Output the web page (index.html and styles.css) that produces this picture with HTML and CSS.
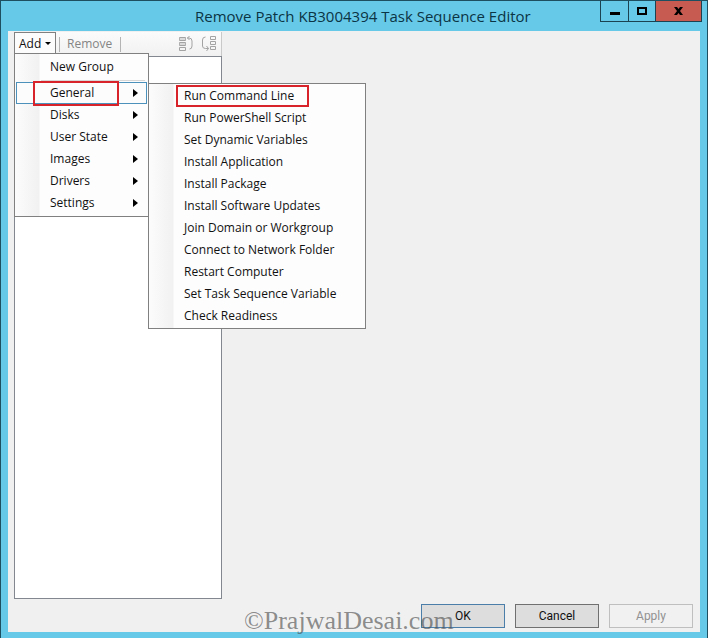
FILE: index.html
```html
<!DOCTYPE html>
<html lang="en">
<head>
<meta charset="utf-8">
<title>Remove Patch KB3004394 Task Sequence Editor</title>
<link rel="stylesheet" href="styles.css">
</head>
<body>
<div class="window">
  <header class="titlebar">
    <h1 class="title">Remove Patch KB3004394 Task Sequence Editor</h1>
    <div class="controls">
      <div class="control minimize"><svg width="10" height="3"><path d="M0 0h10v3H0z"/></svg></div>
      <div class="control maximize"><svg width="10" height="8"><path d="M1 1h8v6H1z" fill="none" stroke="#000" stroke-width="2"/></svg></div>
      <div class="control close"><svg width="9" height="8"><path d="M0 0h3l1.5 2L6 0h3L6 4l3 4H6L4.500 6 3 8H0l3-4z"/></svg></div>
    </div>
  </header>
  <main class="client">
    <section class="sidebar">
      <div class="toolbar">
        <div class="add"><span>Add</span><svg width="6" height="3"><path d="M0 0h6L3 3z"/></svg></div>
        <i class="divider"></i>
        <span class="remove">Remove</span>
        <i class="divider"></i>
        <svg class="move" width="42" height="18" fill="none" stroke="#a3a3a3">
          <path d="M2.500 2.500h6v3h-6zM2.500 7.500h6v3h-6zM2.500 12.500h6v3h-6z"/>
          <path d="M2 4h7M2 9h7" stroke="#bcbcbc"/>
          <path d="M10 3h2q3 0 3 3v5q0 3-2.500 3M12.500 1L10.500 3l2 2"/>
          <path d="M33.500 1.500h5v3h-5zM33.500 6.500h5v3h-5zM33.500 11.500h5v3h-5z"/>
          <path d="M28.500 2Q25.500 2 25.500 5v6q0 2.500 3 2.500h3M29.500 11l2 2.500-2 2.500"/>
        </svg>
      </div>
      <div class="tree"></div>
    </section>
    <footer class="actions">
      <button class="button ok">OK</button>
      <button class="button">Cancel</button>
      <button class="button apply" disabled>Apply</button>
    </footer>
  </main>
  <nav class="menu main-menu">
    <div class="item first"><span>New Group</span></div>
    <div class="item selected"><span class="s-general">General</span><i class="arrow"></i></div>
    <div class="item"><span>Disks</span><i class="arrow"></i></div>
    <div class="item"><span>User State</span><i class="arrow"></i></div>
    <div class="item"><span>Images</span><i class="arrow"></i></div>
    <div class="item"><span>Drivers</span><i class="arrow"></i></div>
    <div class="item"><span>Settings</span><i class="arrow"></i></div>
  </nav>
  <nav class="menu submenu">
    <div class="item">Run Command Line</div>
    <div class="item">Run PowerShell Script</div>
    <div class="item">Set Dynamic Variables</div>
    <div class="item">Install Application</div>
    <div class="item">Install Package</div>
    <div class="item">Install Software Updates</div>
    <div class="item">Join Domain or Workgroup</div>
    <div class="item">Connect to Network Folder</div>
    <div class="item">Restart Computer</div>
    <div class="item">Set Task Sequence Variable</div>
    <div class="item">Check Readiness</div>
  </nav>
  <div class="highlight highlight-general"></div>
  <div class="highlight highlight-command"></div>
  <div class="watermark">©PrajwalDesai.com</div>
</div>
</body>
</html>
```
FILE: styles.css
```css
* { box-sizing: border-box; }
body { margin: 0; font: 12px "Open Sans", "Noto Sans", sans-serif; color: #111; }
svg { display: block; }
.window {
  position: relative; width: 708px; height: 638px; overflow: hidden;
  display: flex; flex-direction: column; padding: 0 7px 6px 7px;
  background: #67c9e8; border: 1px solid #1e4f61; border-bottom: 0;
}
.titlebar { height: 30px; flex: none; display: flex; justify-content: flex-end; position: relative; }
.title {
  position: absolute; left: 187px; top: 4px; margin: 0; white-space: nowrap;
  font-size: 15px; line-height: 22px; font-weight: 400; color: #0b3444;
}
.controls { display: flex; height: 21px; border: 1px solid #1b4251; border-top: 0; margin-right: -2px; }
.control { display: flex; align-items: center; justify-content: center; }
.minimize { width: 27px; padding-top: 4px; }
.maximize { width: 27px; border-left: 1px solid #1b4251; }
.close { width: 46px; background: #c75b51; border-left: 1px solid #1b4251; }
.client { flex: 1; display: flex; flex-direction: column; background: #f0f0f0; padding: 1px 7px 4px 6px; }
.sidebar { width: 208px; height: 567px; display: flex; flex-direction: column; }
.toolbar {
  height: 24px; display: flex; align-items: center; background: linear-gradient(#fbfbfb, #f1f1f1);
  border-right: 1px solid #c9c9c9;
}
.add {
  width: 42px; height: 24px; padding: 0 4px 2px 4px; display: flex; align-items: center; justify-content: space-between;
  background: #fcfcfc; border: 1px solid #808080; border-bottom: 0;
}
.divider { width: 1px; height: 15px; margin: 0 0 0 3px; background: #b4b4b4; }
.remove { margin: 0 5px 2px 7px; color: #848484; }
.move { margin-left: auto; margin-right: 2px; }
.tree { flex: 1; background: #fff; border: 1px solid #828790; }
.actions { display: flex; justify-content: flex-end; gap: 10px; margin-top: 5px; }
.button {
  width: 84px; height: 24px; padding: 0 0 1px; border: 1px solid #707070; background: #ddd;
  font: 12px Roboto, "Liberation Sans", sans-serif; color: #111;
}
.ok { border-color: #4b7faa; }
.apply { background: #f1f1f1; border-color: #bfbfbf; color: #929292; }
.menu { position: absolute; border: 1px solid #808080; line-height: 22px; white-space: nowrap; }
.main-menu {
  left: 13px; top: 52px; width: 135px; height: 164px; padding: 1px;
  background: linear-gradient(90deg, #fcfcfc, #f1f1f1 24px, #fdfdfd 25px);
}
.submenu {
  left: 147px; top: 82px; width: 218px; height: 246px; padding: 1px 0 0 35px;
  background: linear-gradient(90deg, #fcfcfc, #f1f1f1 24px, #fdfdfd 25px);
}
.item { height: 22px; }
.main-menu .item { display: flex; align-items: center; justify-content: space-between; padding: 0 9px 0 34px; }
.main-menu .first { position: relative; height: 27px; padding-bottom: 4px; }
.main-menu .first::after { content: ""; position: absolute; left: 25px; right: 2px; bottom: 1px; height: 1px; background: #d7d7d7; }
.main-menu .selected { padding: 0 8px 0 33px; border: 1px solid #4b91bb; background: #fcfcfc; }
.arrow { width: 5px; height: 8px; background: #000; clip-path: polygon(0 0, 100% 50%, 0 100%); }
.highlight { position: absolute; border: 2px solid #d8232a; }
.highlight-general { left: 32px; top: 80px; width: 86px; height: 25px; }
.highlight-command { left: 175px; top: 84px; width: 133px; height: 22px; }
.watermark {
  position: absolute; left: 243px; top: 604px; line-height: 32px; white-space: nowrap;
  font-family: "Liberation Serif", serif; font-size: 26px; color: rgba(80, 80, 80, .65);
}
```
